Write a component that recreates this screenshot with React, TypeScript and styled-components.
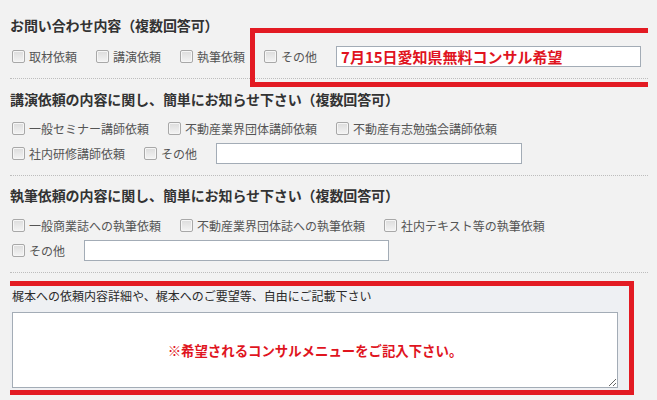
import React from "react";
import styled, { createGlobalStyle } from "styled-components";

interface Option {
  label: string;
}

interface RowProps {
  options: string[];
  otherWidth?: number;
  otherValue?: string;
}

const requestOptions = ["取材依頼", "講演依頼", "執筆依頼"];
const lectureRow1 = ["一般セミナー講師依頼", "不動産業界団体講師依頼", "不動産有志勉強会講師依頼"];
const lectureRow2 = ["社内研修講師依頼"];
const writingRow1 = ["一般商業誌への執筆依頼", "不動産業界団体誌への執筆依頼", "社内テキスト等の執筆依頼"];

const CheckItem: React.FC<Option> = ({ label }) => (
  <Item>
    <Box type="checkbox" />
    <Label>{label}</Label>
  </Item>
);

const Row: React.FC<RowProps> = ({ options, otherWidth, otherValue }) => (
  <StyledRow>
    {options.map((o) => (
      <CheckItem key={o} label={o} />
    ))}
    {otherWidth !== undefined && (
      <>
        <CheckItem label="その他" />
        <TextInput $width={otherWidth} defaultValue={otherValue} />
      </>
    )}
  </StyledRow>
);

const App: React.FC = () => {
  return (
    <>
      <GlobalStyle />
      <Page>
        <Section $pt={15}>
          <Title>お問い合わせ内容（複数回答可）</Title>
          <Rows $mt={11}>
            <Row options={requestOptions} otherWidth={305} otherValue="7月15日愛知県無料コンサル希望" />
          </Rows>
        </Section>
        <Separator />
        <Section $pt={10}>
          <Title>講演依頼の内容に関し、簡単にお知らせ下さい（複数回答可）</Title>
          <Rows $mt={9}>
            <Row options={lectureRow1} />
            <Row options={lectureRow2} otherWidth={306} />
          </Rows>
        </Section>
        <Separator />
        <Section $pt={9}>
          <Title>執筆依頼の内容に関し、簡単にお知らせ下さい（複数回答可）</Title>
          <Rows $mt={10}>
            <Row options={writingRow1} />
            <Row options={[]} otherWidth={305} />
          </Rows>
        </Section>
        <Separator />
        <FreeSection>
          <FreeTitle>梶本への依頼内容詳細や、梶本へのご要望等、自由にご記載下さい</FreeTitle>
          <TextArea defaultValue="※希望されるコンサルメニューをご記入下さい。" />
        </FreeSection>
        <Highlight />
      </Page>
    </>
  );
};

export default App;

// Styled Components
const GlobalStyle = createGlobalStyle`
  body {
    margin: 0;
    background: #f2f2f2;
    font-family: "Noto Sans CJK JP", "Noto Sans", sans-serif;
  }
`;

const Page = styled.div`
  position: relative;
  width: 638px;
  margin-left: 10px;
  height: 400px;
  overflow: hidden;
`;

const Section = styled.div<{ $pt: number }>`
  padding-top: ${(p) => p.$pt}px;
  padding-bottom: 11px;
`;

const Title = styled.div`
  font-size: 14px;
  font-weight: bold;
  line-height: 20px;
  color: #333;
  letter-spacing: -0.1px;
`;

const Rows = styled.div<{ $mt: number }>`
  margin-top: ${(p) => p.$mt}px;
  display: flex;
  flex-direction: column;
  gap: 4px;
`;

const StyledRow = styled.div`
  display: flex;
  align-items: center;
  min-height: 21px;
  padding-left: 2px;
`;

const Item = styled.label`
  display: flex;
  align-items: center;
  margin-right: 19px;
`;

const Box = styled.input`
  appearance: none;
  margin: 0 4px 0 0;
  width: 13px;
  height: 13px;
  border: 1px solid #a8a8a8;
  border-radius: 2px;
  background: linear-gradient(#dcdcdc, #f4f4f4);
  box-shadow: inset 0 0 0 1px #f6f6f6;
`;

const Label = styled.span`
  font-size: 12px;
  line-height: 18px;
  color: #555;
  white-space: nowrap;
`;

const TextInput = styled.input<{ $width: number }>`
  box-sizing: border-box;
  width: ${(p) => p.$width}px;
  height: 21px;
  margin-left: 0;
  padding: 0 4px;
  border: 1px solid #a3acb6;
  background: #fff;
  font-family: "Noto Sans CJK JP", "Noto Sans", sans-serif;
  font-size: 15px;
  font-weight: bold;
  color: #e0141e;
  outline: none;
`;

const Separator = styled.div`
  border-top: 1px dotted #bdbdbd;
`;

const FreeSection = styled.div`
  margin: 8px 0 0 -7px;
  width: 631px;
  box-sizing: border-box;
  border: 5px solid #e31b23;
  background: #eef0f3;
  padding: 1px 11px 2px 4px;
`;

const FreeTitle = styled.div`
  font-size: 12px;
  line-height: 18px;
  color: #2a2a2a;
`;

const TextArea = styled.textarea`
  display: block;
  box-sizing: border-box;
  width: 606px;
  height: 76px;
  margin-top: 7px;
  padding-top: 28px;
  border: 1px solid #a3acb6;
  background: #fff;
  text-align: center;
  font-family: "Noto Sans CJK JP", "Noto Sans", sans-serif;
  font-size: 13.4px;
  font-weight: bold;
  line-height: 18px;
  color: #e0141e;
  outline: none;
`;

const Highlight = styled.div`
  position: absolute;
  left: 240px;
  top: 28px;
  width: 405px;
  height: 59px;
  box-sizing: border-box;
  border: 5px solid #e31b23;
  pointer-events: none;
`;
